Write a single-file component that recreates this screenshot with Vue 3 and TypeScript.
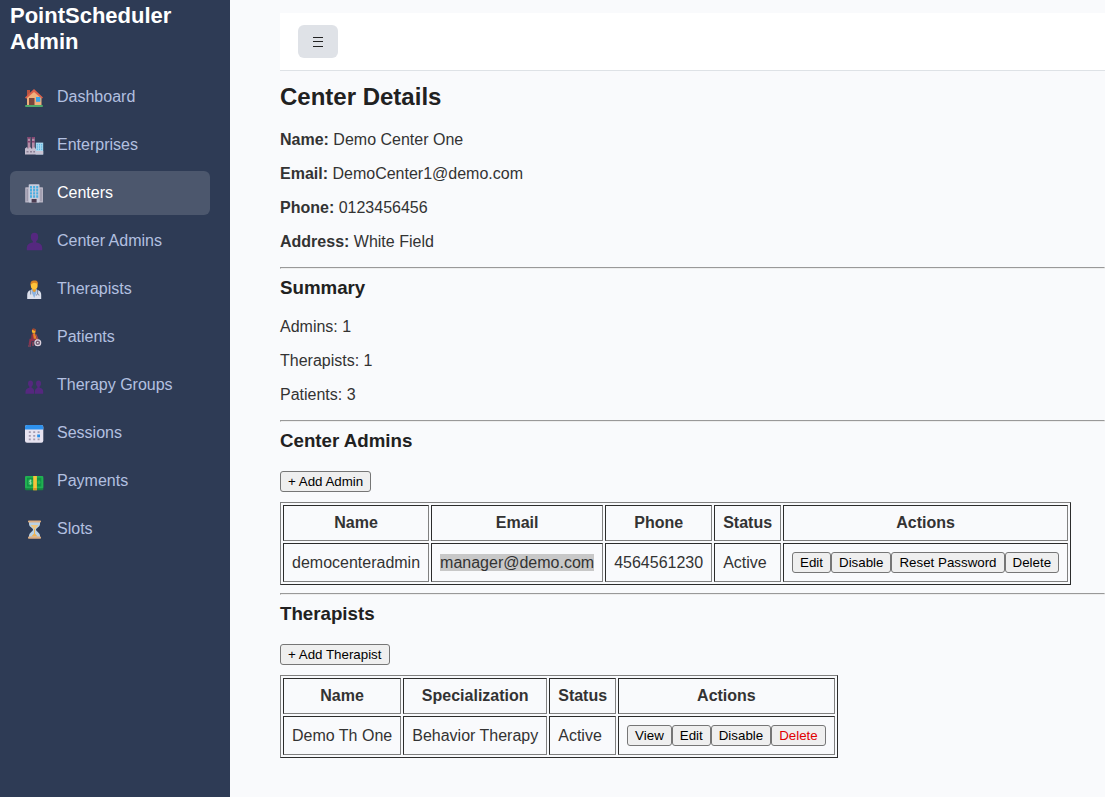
<script setup lang="ts">
import { ref } from 'vue'

interface NavItem { id: string; label: string }
interface Admin { name: string; email: string; phone: string; status: string }
interface Therapist { name: string; specialization: string; status: string }

const nav: NavItem[] = [
  { id: 'dashboard', label: 'Dashboard' },
  { id: 'enterprises', label: 'Enterprises' },
  { id: 'centers', label: 'Centers' },
  { id: 'admins', label: 'Center Admins' },
  { id: 'therapists', label: 'Therapists' },
  { id: 'patients', label: 'Patients' },
  { id: 'groups', label: 'Therapy Groups' },
  { id: 'sessions', label: 'Sessions' },
  { id: 'payments', label: 'Payments' },
  { id: 'slots', label: 'Slots' },
]
const active = ref('centers')

const details = [
  { label: 'Name', value: 'Demo Center One' },
  { label: 'Email', value: 'DemoCenter1@demo.com' },
  { label: 'Phone', value: '0123456456' },
  { label: 'Address', value: 'White Field' },
]
const summary = [
  { label: 'Admins', count: 1 },
  { label: 'Therapists', count: 1 },
  { label: 'Patients', count: 3 },
]
const admins: Admin[] = [
  { name: 'democenteradmin', email: 'manager@demo.com', phone: '4564561230', status: 'Active' },
]
const therapists: Therapist[] = [
  { name: 'Demo Th One', specialization: 'Behavior Therapy', status: 'Active' },
]
</script>

<template>
  <div class="layout">
    <aside class="sidebar">
      <div class="brand">PointScheduler Admin</div>
      <nav class="nav">
        <a
          v-for="item in nav"
          :key="item.id"
          :href="'#' + item.id"
          class="nav-link"
          :class="{ active: active === item.id }"
          @click="active = item.id"
        >
          <svg class="icon" viewBox="0 0 20 20" aria-hidden="true">
            <g v-if="item.id === 'dashboard'">
              <rect x="3" y="3" width="3" height="6" fill="#b9533f" />
              <path d="M3 10 10 3.5 17.5 10V18.5H3z" fill="#eeb07c" />
              <path d="M1 10.5 10 2 19 10.5 17.8 11.7 10 5 2.2 11.7z" fill="#d9604a" />
              <rect x="5" y="11" width="5.5" height="7.5" fill="#79453c" />
              <rect x="12" y="10" width="4.3" height="4.8" fill="#38a5e8" />
              <rect x="1" y="18" width="18" height="2" rx="1" fill="#4fa76b" />
            </g>
            <g v-else-if="item.id === 'enterprises'">
              <rect x="3.6" y="2" width="2.8" height="12" fill="#b48ba6" />
              <rect x="7.9" y="2" width="2.8" height="12" fill="#b48ba6" />
              <path d="M3.6 2h2.8v1.8H3.6zM7.9 2h2.8v1.8H7.9zM3.6 6h2.8v1.6H3.6zM7.9 6h2.8v1.6H7.9z" fill="#85436f" />
              <path d="M1 13.5 3 12 4 14 6 12 8 14 10 12 12 14v5.5H1z" fill="#c5bdce" />
              <rect x="11.8" y="7.6" width="7.4" height="11.9" fill="#a7d8ef" />
              <path d="M13.3 9v6M15.5 9v6M17.7 9v6" stroke="#5db4e2" stroke-width="1.1" stroke-dasharray="1.5 .7" />
              <path d="M11.8 16h7.4v3.5h-7.4z" fill="#c9c3d3" />
              <path d="M2.5 16h2v1.5h-2zM6 16h2v1.5H6zM9.3 16h1.7v1.5H9.3z" fill="#8b8196" />
            </g>
            <g v-else-if="item.id === 'centers'">
              <rect x="1.2" y="4.2" width="17.8" height="15.4" rx=".7" fill="#b6b3c2" />
              <path d="M3.2 6v12M17 6v12" stroke="#918da1" stroke-width="1" />
              <rect x="4.7" y="1.3" width="10.8" height="18.3" rx=".8" fill="#c8cbdb" />
              <path d="M7 3v12M10.1 3v12M13.2 3v12" stroke="#49aee0" stroke-width="2" stroke-dasharray="2.4 .7" />
              <rect x="7.6" y="16" width="5" height="3.6" fill="#4b3d51" />
            </g>
            <g v-else-if="item.id === 'admins'" fill="#55287f">
              <ellipse cx="10.5" cy="6" rx="3.7" ry="4.2" />
              <path d="M8.8 9h3.4v3.2H8.8z" />
              <path d="M2.8 19.3v-2c0-4 3-5.7 7.7-5.7s7.7 1.7 7.7 5.7v2z" />
            </g>
            <g v-else-if="item.id === 'therapists'">
              <path d="M3.2 20v-4c0-4 2.7-5.5 7-5.5s7 1.5 7 5.5v4z" fill="#dce0ec" />
              <path d="M7.5 10h5.3l-.5 4-2.1 5-2.2-5z" fill="#8eb3df" />
              <path d="M6.7 11v4.5M13.6 11v4M12.4 16.5c0-2 2.6-2 2.6 0" stroke="#6c7c99" stroke-width=".9" fill="none" />
              <path d="M8.6 9h3.2v3l-1.6 1.2L8.6 12z" fill="#e99a28" />
              <ellipse cx="10.2" cy="6.5" rx="3.4" ry="4" fill="#ffc43a" />
              <path d="M6.6 6.5C6 2.5 8 1.4 10.5 1.5c3-.1 4 2 3.3 5l-.8-2-3-.8-2.4 1z" fill="#d98524" />
            </g>
            <g v-else-if="item.id === 'patients'">
              <path d="M8.5 6.5 11 6l2.2 7.2H8.5z" fill="#e98126" />
              <path d="M7.5 7.5 9 7l1 6H7z" fill="#913143" />
              <ellipse cx="9.8" cy="3.9" rx="2" ry="2.2" fill="#f6b32d" />
              <path d="M8 2.8c0-1.8 3.4-1.8 3.7.5v2l-1-1.6z" fill="#a3442f" />
              <path d="M12 13H6.5l-.8 5" stroke="#89344f" stroke-width="2.3" fill="none" />
              <path d="M4 19h3M9 15v4M12 7.5l2 5" stroke="#a3475b" stroke-width="1.2" />
              <circle cx="13.8" cy="15.7" r="2.9" fill="#766076" stroke="#ddd3df" stroke-width="1.2" />
              <circle cx="13.8" cy="15.7" r=".8" fill="#fff" />
            </g>
            <g v-else-if="item.id === 'groups'" fill="#55287f">
              <ellipse cx="6.5" cy="8.6" rx="2.5" ry="3" />
              <ellipse cx="14.5" cy="8.6" rx="2.5" ry="3" />
              <path d="M5.3 11h2.4v2H5.3zM13.3 11h2.4v2h-2.4z" />
              <path d="M1.5 18.8v-2c0-2.8 2-4 4.7-4 2.8 0 4 1.4 4 4v2zM10.9 18.8v-2c0-2.8 1.3-4 4-4s4.3 1.2 4.3 4v2z" />
            </g>
            <g v-else-if="item.id === 'sessions'">
              <rect x="1" y="2" width="18.3" height="17.7" rx="2" fill="#e7e3f0" />
              <path d="M1 6.4V4a2 2 0 0 1 2-2h14.3a2 2 0 0 1 2 2v2.4z" fill="#2e91ed" />
              <path d="M4.8 9.2h2M9.2 9.2h2M13.6 9.2h2M4.8 12.8h2M9.2 12.8h2M4.8 16.4h2M9.2 16.4h2M13.6 16.4h2" stroke="#a39bb1" stroke-width="1.8" />
              <rect x="13.2" y="11.5" width="2.8" height="2.8" fill="#248eeb" />
            </g>
            <g v-else-if="item.id === 'payments'">
              <path d="M1 7h18.3v11.2a1 1 0 0 1-1 1H2a1 1 0 0 1-1-1z" fill="#168240" />
              <rect x="1" y="5" width="18.3" height="12.2" rx="1" fill="#21b152" />
              <rect x="3" y="6.7" width="14.3" height="8.8" fill="#109444" />
              <ellipse cx="6.4" cy="11.2" rx="2.5" ry="3.2" fill="#27ad56" />
              <path d="M7.4 9.7c-2.3-.8-2.5 1-1 1.4 1.8.5 1 2.4-1.1 1.6M6.4 8.5v5.2" stroke="#b3e5b8" stroke-width=".7" fill="none" />
              <ellipse cx="15" cy="11.2" rx="1.5" ry="2" fill="#27ad56" />
              <rect x="9.2" y="5" width="3.7" height="14.2" fill="#f7c43b" />
              <rect x="9.2" y="17" width="3.7" height="2.2" fill="#d9942a" />
            </g>
            <g v-else>
              <path d="M5 3h11v2c0 3-4 4-4 5.7s4 2.8 4 6v1.5H5v-1.5c0-3.2 4-4.3 4-6S5 8 5 5z" fill="#b9d1e4" />
              <path d="M6.8 6h7.4c-.7 2-2.6 2.5-3.2 4.3h-1C9.4 8.5 7.5 8 6.8 6z" fill="#efc67e" />
              <path d="M10 10h1v4.6l2.6 3H7.4l2.6-3z" fill="#efb353" />
              <rect x="4" y="1.4" width="13" height="2.1" rx=".8" fill="#ddae82" />
              <rect x="4" y="17.6" width="13" height="2.1" rx=".8" fill="#ddae82" />
            </g>
          </svg>
          <span>{{ item.label }}</span>
        </a>
      </nav>
    </aside>

    <main class="main">
      <header class="topbar">
        <button type="button" class="toggle" aria-label="Toggle menu">
          <svg class="bars" viewBox="0 0 12 12" aria-hidden="true">
            <path d="M1 1.5h10M1 5.5h10M1 10.5h10" stroke="#222" stroke-width="1" />
          </svg>
        </button>
      </header>

      <h2>Center Details</h2>
      <p v-for="d in details" :key="d.label"><strong>{{ d.label }}:</strong> {{ d.value }}</p>
      <hr />

      <h3>Summary</h3>
      <p v-for="s in summary" :key="s.label">{{ s.label }}: {{ s.count }}</p>
      <hr />

      <h3>Center Admins</h3>
      <button type="button" class="btn">+ Add Admin</button>
      <table>
        <thead>
          <tr><th>Name</th><th>Email</th><th>Phone</th><th>Status</th><th>Actions</th></tr>
        </thead>
        <tbody>
          <tr v-for="a in admins" :key="a.email">
            <td>{{ a.name }}</td>
            <td><span class="selected">{{ a.email }}</span></td>
            <td>{{ a.phone }}</td>
            <td>{{ a.status }}</td>
            <td class="actions"><button type="button" class="btn">Edit</button><button type="button" class="btn">Disable</button><button type="button" class="btn">Reset Password</button><button type="button" class="btn">Delete</button></td>
          </tr>
        </tbody>
      </table>
      <hr />

      <h3>Therapists</h3>
      <button type="button" class="btn">+ Add Therapist</button>
      <table>
        <thead>
          <tr><th>Name</th><th>Specialization</th><th>Status</th><th>Actions</th></tr>
        </thead>
        <tbody>
          <tr v-for="t in therapists" :key="t.name">
            <td>{{ t.name }}</td>
            <td>{{ t.specialization }}</td>
            <td>{{ t.status }}</td>
            <td class="actions"><button type="button" class="btn">View</button><button type="button" class="btn">Edit</button><button type="button" class="btn">Disable</button><button type="button" class="btn danger">Delete</button></td>
          </tr>
        </tbody>
      </table>
    </main>
  </div>
</template>

<style>
body {
  margin: 0;
  background: #f9fafc;
}
</style>

<style scoped>
.layout {
  display: flex;
  min-height: 100vh;
  overflow: hidden;
  font-family: "Liberation Sans", Arial, sans-serif;
  font-size: 16px;
  line-height: 18px;
  color: #333;
}
.sidebar {
  box-sizing: border-box;
  flex: none;
  width: 230px;
  padding: 3px 20px 20px 10px;
  background: #2e3b55;
}
.brand {
  margin-bottom: 20px;
  color: #fff;
  font-size: 22px;
  font-weight: bold;
  line-height: 26px;
}
.nav {
  display: flex;
  flex-direction: column;
  gap: 4px;
}
.nav-link {
  display: flex;
  align-items: center;
  gap: 13px;
  height: 44px;
  padding: 0 14px;
  border-radius: 6px;
  color: #b3c0e0;
  text-decoration: none;
}
.nav-link.active {
  background: #4c576d;
  color: #fff;
}
.icon {
  flex: none;
  width: 20px;
  height: 20px;
}
.main {
  flex: 1;
  min-width: 0;
  padding: 13px 0 20px 50px;
}
.topbar {
  display: flex;
  padding: 12px 18px;
  background: #fff;
  border-bottom: 1px solid #dee2e6;
}
.toggle {
  display: flex;
  align-items: center;
  justify-content: center;
  width: 40px;
  height: 33px;
  padding: 0;
  border: 0;
  border-radius: 6px;
  background: #dfe2e7;
}
.bars {
  width: 12px;
  height: 12px;
}
h2 {
  margin: 12px 0 21px;
  font-size: 24px;
  line-height: 27px;
  color: #212121;
}
h3 {
  margin: 0 0 20px;
  line-height: 21px;
  color: #212121;
}
p {
  margin: 16px 0;
}
hr {
  margin: 8px 0;
  border: 1px solid;
  border-color: #999 #eee #eee #999;
}
.btn {
  padding: 2px 7px;
  border: 1px solid #767676;
  border-radius: 3px;
  background: #efefef;
  color: #000;
  font-family: "Liberation Sans", Arial, sans-serif;
}
.btn.danger {
  color: #e00000;
}
table {
  margin-top: 10px;
  border: 1px solid;
  border-color: #808080 #2c2c2c #2c2c2c #808080;
  border-spacing: 2px;
}
th,
td {
  padding: 8px;
  border: 1px solid;
  border-color: #2c2c2c #808080 #808080 #2c2c2c;
}
td {
  text-align: left;
}
.actions {
  white-space: nowrap;
}
.selected {
  background: #c8c8c8;
}
</style>
